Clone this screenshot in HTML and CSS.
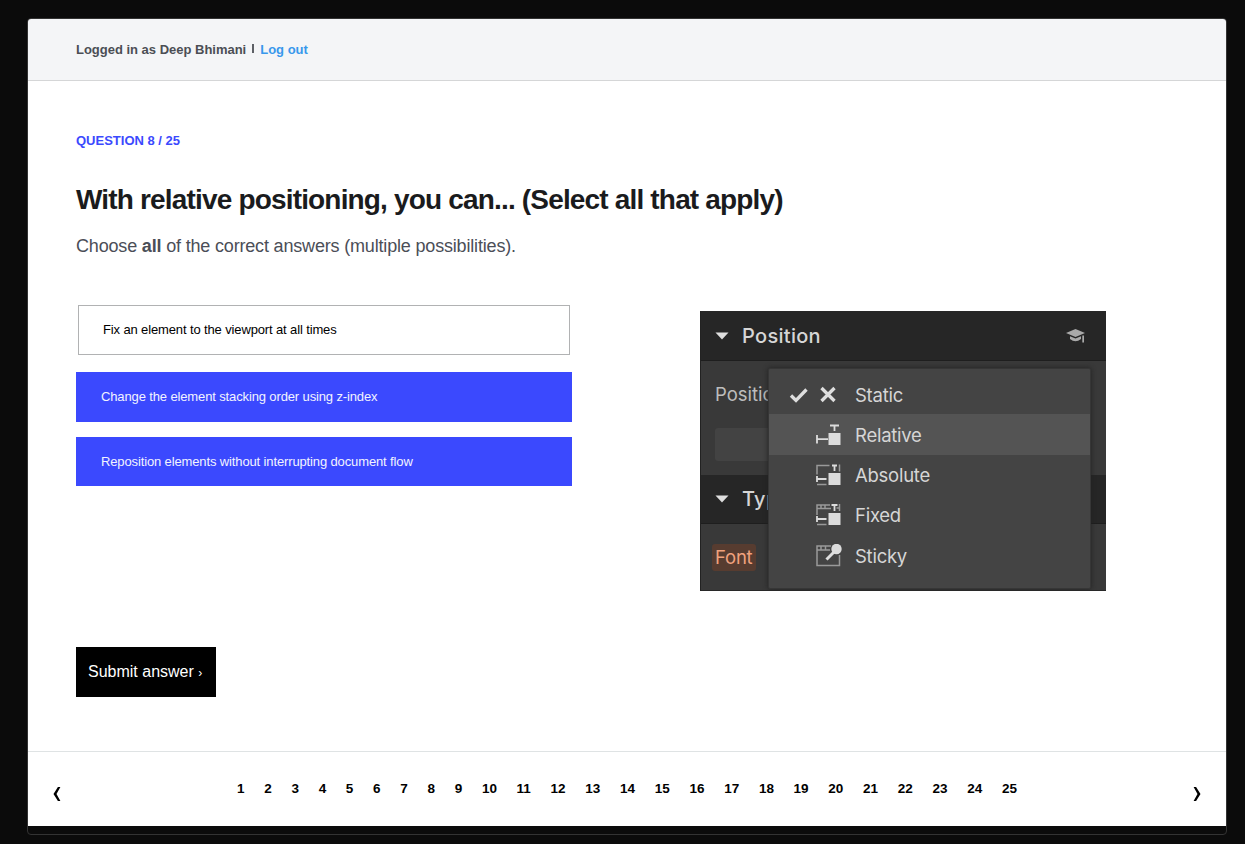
FILE: index.html
```
<!DOCTYPE html>
<html lang="en">
<head>
<meta charset="utf-8">
<title>Question 8 / 25</title>
<link rel="stylesheet" href="styles.css">
</head>
<body>
<div class="window">
  <header class="topbar"><span class="user">Logged in as Deep Bhimani</span><span class="divider"></span><a class="logout">Log out</a></header>
  <main class="content">
    <div class="counter"><span>QUESTION 8 / 25</span></div>
    <h1 class="title"><span>With relative positioning, you can... (Select all that apply)</span></h1>
    <p class="hint"><span>Choose <b>all</b> of the correct answers (multiple possibilities).</span></p>
    <div class="columns">
      <div class="answers">
        <div class="answer"><span>Fix an element to the viewport at all times</span></div>
        <div class="answer selected second"><span>Change the element stacking order using z-index</span></div>
        <div class="answer selected third"><span>Reposition elements without interrupting document flow</span></div>
      </div>
      <div class="panel">
        <div class="section first"><svg class="caret" viewBox="0 0 14 8"><path d="M0.5 0.5h13L7 7.5z"/></svg><span>Position</span>
          <svg class="cap" viewBox="0 0 20 16"><path d="M0 5 9.5 1 19 5 9.5 9z"/><path d="M4 8.2 9.5 10.6 15 8.2V11Q9.5 15.5 4 11z"/><path d="M16.3 7.5h1.7v7h-1.7z"/></svg>
        </div>
        <div class="field"><span class="label">Position</span><div class="input"></div></div>
        <div class="section second-section"><svg class="caret" viewBox="0 0 14 8"><path d="M0.5 0.5h13L7 7.5z"/></svg><span>Typography</span></div>
        <div class="font-row"><span class="font-tag">Font</span></div>
        <div class="menu">
          <div class="item"><svg class="mark" viewBox="0 0 20 20"><path d="M2 10.500 7 15.500 17.500 4.500"/></svg><svg class="icon" viewBox="0 0 26 24"><path class="cross" d="M5.500 5 18.500 18M18.500 5 5.500 18"/></svg><span>Static</span></div>
          <div class="item active"><svg class="icon" viewBox="0 0 26 24"><path class="fill" d="M12.500 10h12v12h-12z"/><path class="line" d="M14 2.500h9M18.500 3v5M1 12v8.500M1 16.200h11"/></svg><span>Relative</span></div>
          <div class="item"><svg class="icon" viewBox="0 0 26 24"><path class="dim" d="M1 11.500V2.500h12.500M23.500 1.500v7M1 21.500h9.500"/><path class="fill" d="M12.500 10h12v12h-12z"/><path class="line" d="M16 2.500h5M18.500 2v6M1 13v6M1 16h9.500"/></svg><span>Absolute</span></div>
          <div class="item"><svg class="icon" viewBox="0 0 26 24"><path class="dim" d="M1 12V2h13M1 5.500h14M5 2v3.500M9 2v3.500M20.500 5h3M23.500 1v7M1 21.500h9.500"/><path class="fill" d="M12.500 10h12v12h-12z"/><path class="line" d="M15.500 2h6M18.500 2v6M1 13v6M1 16h9.500"/></svg><span>Fixed</span></div>
          <div class="item"><svg class="icon" viewBox="0 0 26 24"><path class="dim" d="M15 2H1v19.500h22.500V11M1 6h13M5 2v4M9.500 2v4"/><circle class="fill" cx="20.500" cy="5" r="5.200"/><path class="pin" d="M18.500 7.500 10.500 15.500"/></svg><span>Sticky</span></div>
        </div>
      </div>
    </div>
    <button class="submit"><span>Submit answer <span class="chevron">›</span></span></button>
  </main>
  <footer class="pager">
    <svg class="arrow" viewBox="0 0 8 16"><path d="M4.900 1h2.500L3.500 8l3.900 7H4.900L.5 8z"/></svg>
    <nav class="pages"><a>1</a><a>2</a><a>3</a><a>4</a><a>5</a><a>6</a><a>7</a><a>8</a><a>9</a><a>10</a><a>11</a><a>12</a><a>13</a><a>14</a><a>15</a><a>16</a><a>17</a><a>18</a><a>19</a><a>20</a><a>21</a><a>22</a><a>23</a><a>24</a><a>25</a></nav>
    <svg class="arrow" viewBox="0 0 8 16"><path d="M3.100 1H.6l3.900 7-3.900 7h2.500L7.500 8z"/></svg>
  </footer>
</div>
</body>
</html>
```
FILE: styles.css
```
* { box-sizing: border-box; }
body { margin: 0; height: 844px; padding: 18px 18px 0 27px; background: #0b0b0b; overflow: hidden; font-family: "Liberation Sans", Arial, sans-serif; }
.window { width: 1200px; height: 817px; border: 1px solid #333; border-radius: 4px; overflow: hidden; }
.topbar { height: 62px; background: #f4f5f7; border-bottom: 1px solid #d5d6d7; padding-left: 48px; display: flex; align-items: center; font-size: 13px; font-weight: bold; color: #4b4e54; }
.user { letter-spacing: -0.01px; }
.divider { width: 2px; height: 9px; margin: 0 6px 3px; background: #5d6066; }
.logout { color: #3898ec; letter-spacing: 0; }
.content { height: 670px; padding: 51px 48px 0; background: #fff; }
.counter { font-size: 13px; line-height: 18px; font-weight: bold; color: #3b49fe; letter-spacing: 0; }
.title { margin: 32px 0 0; font-size: 28px; line-height: 36px; letter-spacing: -0.83px; color: #1a1b1d; white-space: nowrap; }
.hint { margin: 16px 0 0; font-size: 18px; line-height: 24px; color: #4b4e57; letter-spacing: -0.175px; white-space: nowrap; }
.columns { margin-top: 47px; display: flex; height: 342px; }
.answers { width: 496px; }
.answer { height: 50px; margin: 0 2px; padding: 0 0 1px 24px; border: 1px solid #b1b2b3; display: flex; align-items: center; font-size: 13px; color: #000; letter-spacing: -0.13px; }
.answer.selected { margin: 0; padding-left: 25px; border: 0; background: #3b49fe; color: #f2f3ff; }
.answer.second { margin-top: 17px; }
.answer.third { margin-top: 15px; height: 49px; }
.panel { position: relative; width: 406px; height: 280px; margin: 6px 0 0 128px; overflow: hidden; background: #393939; border-left: 1px solid #222; border-bottom: 1px solid #282828; font-family: Inter, sans-serif; color: #d6d6d6; }
.section { height: 50px; padding: 0 20px 0 14px; display: flex; align-items: center; background: #262626; border-bottom: 1px solid #1e1e1e; font-size: 20px; font-weight: 500; letter-spacing: 0.3px; }
.second-section { height: 49px; }
.caret { width: 14px; height: 8px; margin-right: 13px; fill: #dedede; }
.cap { width: 20px; height: 16px; margin-left: auto; fill: #a9a9a9; }
.field { height: 114px; padding: 19px 14px 0; }
.label { display: block; height: 26px; font-size: 18.500px; line-height: 28px; color: #bdbdbd; }
.input { width: 100px; height: 33px; margin-top: 22px; background: #434343; border-radius: 3px; }
.font-row { padding: 20px 11px 0; }
.font-tag { display: inline-block; width: 44px; height: 27px; padding-left: 3px; border-radius: 3px; background: #573c30; color: #f0a27e; font-size: 18.500px; line-height: 27px; letter-spacing: -0.2px; }
.menu { position: absolute; left: 67px; top: 57px; width: 323px; height: 221px; padding-top: 5px; background: #444; border: 1px solid #363636; border-radius: 2px; box-shadow: 0 0 5px #222; font-size: 18.500px; letter-spacing: -0.25px; }
.item { display: flex; align-items: center; height: 40.250px; padding: 1px 0 0 47px; }
.item.active { background: #545454; }
.item span { margin-left: 13px; }
.icon { width: 26px; height: 24px; fill: none; }
.mark { width: 20px; height: 20px; margin: 0 7px 0 -27px; fill: none; stroke: #dedede; stroke-width: 3.300; }
.fill { fill: #dcdcdc; }
.line { stroke: #dcdcdc; stroke-width: 1.800; }
.dim { stroke: #999; stroke-width: 1.500; }
.cross { stroke: #dedede; stroke-width: 3.300; }
.pin { stroke: #dedede; stroke-width: 3; }
.submit { display: block; width: 140px; height: 50px; margin: 0; padding: 0 0 0 12px; border: 0; background: #000; color: #fff; font: 16px "Liberation Sans", Arial, sans-serif; text-align: left; }
.chevron { font-size: 12px; }
.pager { height: 75px; padding: 4px 25px 0; background: #fff; border-top: 1px solid #dfe3e4; display: flex; justify-content: space-between; align-items: center; }
.arrow { width: 8px; height: 16px; margin-top: 6px; fill: #000; }
.pages { display: flex; gap: 19.700px; margin-bottom: 5px; font-size: 13.500px; font-weight: bold; color: #000; }
```
